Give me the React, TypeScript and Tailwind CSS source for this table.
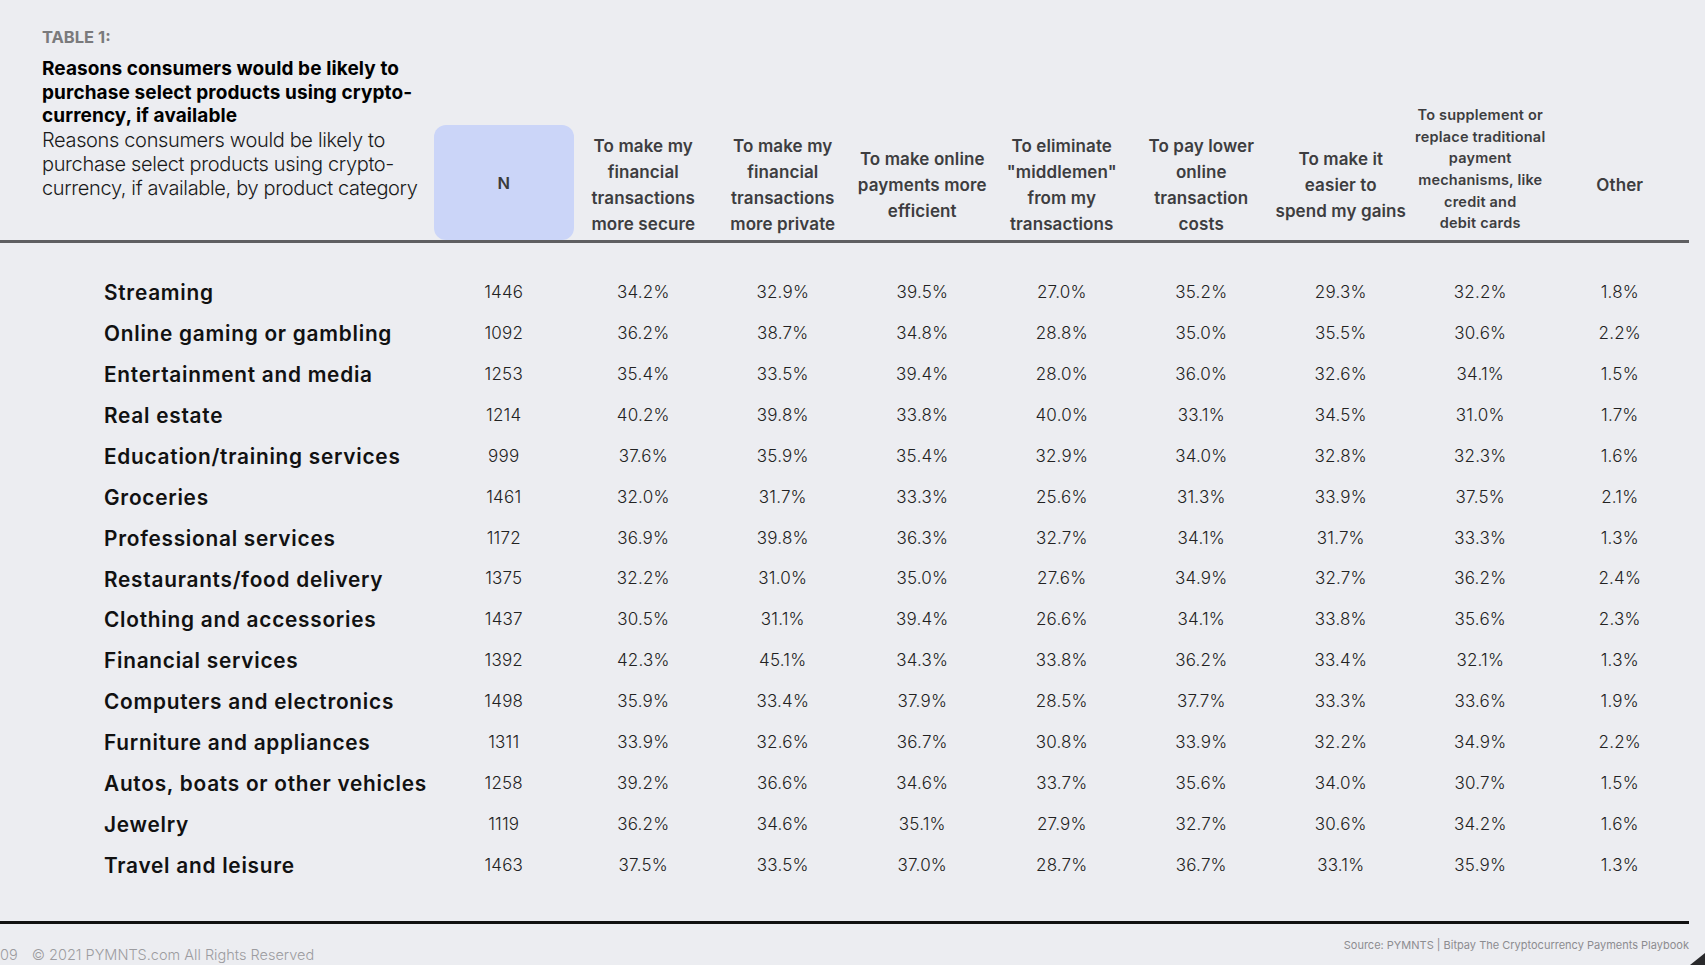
import type { FC, JSX } from "react";

interface Row {
  label: string;
  n: string;
  values: string[];
}

// column headings, one array entry per printed line
const HEADERS: string[][] = [
  ["To make my", "financial", "transactions", "more secure"],
  ["To make my", "financial", "transactions", "more private"],
  ["To make online", "payments more", "efficient"],
  ["To eliminate", "\"middlemen\"", "from my", "transactions"],
  ["To pay lower", "online", "transaction", "costs"],
  ["To make it", "easier to", "spend my gains"],
  [
    "To supplement or",
    "replace traditional",
    "payment",
    "mechanisms, like",
    "credit and",
    "debit cards",
  ],
  ["Other"],
];

const raw: [string, string, string][] = [
  ["Streaming", "1446", "34.2 32.9 39.5 27.0 35.2 29.3 32.2 1.8"],
  ["Online gaming or gambling", "1092", "36.2 38.7 34.8 28.8 35.0 35.5 30.6 2.2"],
  ["Entertainment and media", "1253", "35.4 33.5 39.4 28.0 36.0 32.6 34.1 1.5"],
  ["Real estate", "1214", "40.2 39.8 33.8 40.0 33.1 34.5 31.0 1.7"],
  ["Education/training services", "999", "37.6 35.9 35.4 32.9 34.0 32.8 32.3 1.6"],
  ["Groceries", "1461", "32.0 31.7 33.3 25.6 31.3 33.9 37.5 2.1"],
  ["Professional services", "1172", "36.9 39.8 36.3 32.7 34.1 31.7 33.3 1.3"],
  ["Restaurants/food delivery", "1375", "32.2 31.0 35.0 27.6 34.9 32.7 36.2 2.4"],
  ["Clothing and accessories", "1437", "30.5 31.1 39.4 26.6 34.1 33.8 35.6 2.3"],
  ["Financial services", "1392", "42.3 45.1 34.3 33.8 36.2 33.4 32.1 1.3"],
  ["Computers and electronics", "1498", "35.9 33.4 37.9 28.5 37.7 33.3 33.6 1.9"],
  ["Furniture and appliances", "1311", "33.9 32.6 36.7 30.8 33.9 32.2 34.9 2.2"],
  ["Autos, boats or other vehicles", "1258", "39.2 36.6 34.6 33.7 35.6 34.0 30.7 1.5"],
  ["Jewelry", "1119", "36.2 34.6 35.1 27.9 32.7 30.6 34.2 1.6"],
  ["Travel and leisure", "1463", "37.5 33.5 37.0 28.7 36.7 33.1 35.9 1.3"],
];

const ROWS: Row[] = raw.map(([label, n, vals]) => ({
  label,
  n,
  values: vals.split(" ").map((v) => `${v}%`),
}));

const GRID = "grid grid-cols-[434px_repeat(9,139.5px)]";

const App: FC = (): JSX.Element => {
  return (
    <div className="relative h-[965px] w-[1705px] overflow-hidden bg-[#ecedf1] font-['Inter','Noto_Sans',sans-serif] text-[#111]">
      <div className="w-[1689px] pt-[27px]">
        {/* Title + column headings */}
        <div className={`${GRID} border-b-[3px] border-[#5f5f62]`}>
          <div className="self-start pb-[40px] pl-[42px]">
            <div className="text-[16.5px] font-bold leading-[20px] text-[#7a7a7c]">
              TABLE 1:
            </div>
            <div className="mt-[10px] text-[19px] font-bold leading-[23.5px] tracking-[0.1px] text-black">
              Reasons consumers would be likely to
              <br />
              purchase select products using crypto-
              <br />
              currency, if available
            </div>
            <div className="text-[20px] font-light leading-[24px] tracking-[-0.35px] text-[#1a1a1a]">
              Reasons consumers would be likely to
              <br />
              purchase select products using crypto-
              <br />
              currency, if available, by product category
            </div>
          </div>

          <div className="flex h-[115px] items-center justify-center self-end rounded-[12px] bg-[#cbd5f8] pt-[3px] text-[16.5px] font-semibold text-[#3a3a3c]">
            N
          </div>

          {HEADERS.map((lines, i) => {
            const small = lines.length > 4;
            return (
              <div
                key={i}
                className={`flex h-[115px] items-center justify-center self-end text-center font-semibold text-[#3d3d40] ${
                  small
                    ? "pb-[26px] text-[14.5px] leading-[21.7px] tracking-[0.2px]"
                    : "pt-[8px] text-[17px] leading-[25.8px] tracking-[0.1px]"
                }`}
              >
                <div className="whitespace-nowrap">
                  {lines.map((l) => (
                    <div key={l}>{l}</div>
                  ))}
                </div>
              </div>
            );
          })}
        </div>

        {/* Data rows */}
        <div className="mt-[30px]">
          {ROWS.map((row) => (
            <div key={row.label} className={`${GRID} h-[40.9px] items-center`}>
              <div className="pl-[104px] text-[20.8px] font-semibold tracking-[0.75px] text-[#111]">
                {row.label}
              </div>
              <div className="text-center text-[17px] font-light tracking-[0.2px] text-[#222]">
                {row.n}
              </div>
              {row.values.map((v, i) => (
                <div
                  key={i}
                  className="text-center text-[17px] font-light tracking-[0.2px] text-[#222]"
                >
                  {v}
                </div>
              ))}
            </div>
          ))}
        </div>

        {/* Footer */}
        <div className="mt-[35px] border-t-[3px] border-[#111]">
          <div className="flex items-start justify-between">
            <div className="mt-[21px] flex gap-[14px] text-[14.5px] font-light leading-[20px] text-[#9c9ca0]">
              <span>09</span>
              <span>© 2021 PYMNTS.com All Rights Reserved</span>
            </div>
            <div className="mt-[13px] text-[11px] leading-[16px] text-[#8c8c90]">
              Source: PYMNTS | Bitpay The Cryptocurrency Payments Playbook
            </div>
          </div>
        </div>
      </div>

      {/* corner decoration */}
      <svg
        className="absolute bottom-0 right-0"
        width="20"
        height="16"
        viewBox="0 0 20 16"
        aria-hidden="true"
      >
        <polygon points="5,16 20,4 20,16" fill="#2a2a2c" />
      </svg>
    </div>
  );
};

export default App;
